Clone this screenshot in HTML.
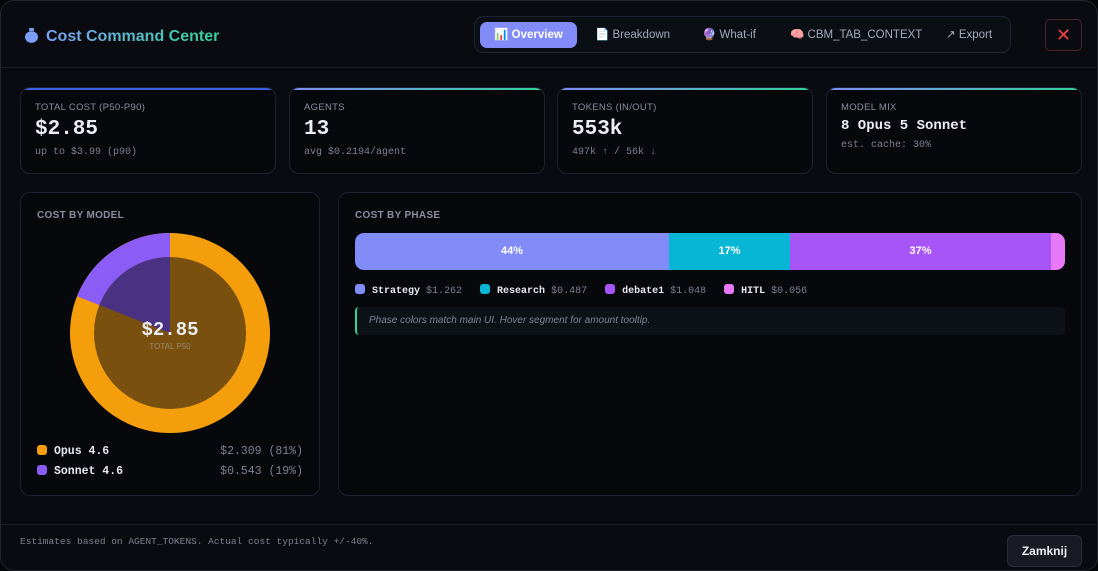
<!DOCTYPE html><html><head><style>
*{box-sizing:border-box;margin:0;padding:0}
body{width:1098px;height:571px;background:#050608;font-family:"Liberation Sans",sans-serif;overflow:hidden;position:relative}
.modal{position:absolute;left:0;top:0;width:1098px;height:571px;background:#0a0b10;box-shadow:inset 0 0 0 1px #23252f;border-radius:14px}
.mono{font-family:"Liberation Mono",monospace}
.hdr{position:absolute;left:0;top:0;width:1098px;height:68px;border-bottom:1px solid #1c1e28}
.title{position:absolute;left:46px;top:28px;font-size:16px;font-weight:bold;background:linear-gradient(90deg,#7aa0f5,#34d399);-webkit-background-clip:text;color:transparent}
.tabs{position:absolute;left:474px;top:16px;width:537px;height:37px;border:1px solid #1f2336;border-radius:9px;background:#0c0e16}
.tab{position:absolute;top:5px;height:26px;line-height:26px;font-size:11.5px;color:#a4a8b8}
.tab.on{left:5px;width:97px;background:#818cf8;border-radius:7px;color:#fff;font-weight:bold;text-align:center}
.close{position:absolute;left:1045px;top:19px;width:37px;height:32px;border:1px solid #4a2428;border-radius:5px;color:#ef4444;text-align:center;line-height:30px;font-size:18px}
.card{position:absolute;top:87px;height:87px;border:1px solid #1e2130;border-radius:10px;background:#07080c;overflow:hidden}
.card:before{content:"";position:absolute;left:0;right:0;top:0;height:2px;background:linear-gradient(90deg,#818cf8,#34d399)}
.card.b:before{background:#3b62e0}
.lbl{position:absolute;left:14px;top:14px;font-size:9.5px;color:#8a8ea0;letter-spacing:.3px}
.val{position:absolute;left:14px;top:30px;font-size:21px;font-weight:bold;color:#eceef4}
.sub{position:absolute;left:14px;top:59px;font-size:10px;color:#7c8090}
.panel{position:absolute;top:192px;height:304px;border:1px solid #1e2130;border-radius:10px;background:#07080c}
.pt{position:absolute;left:16px;top:17px;font-size:10px;font-weight:bold;color:#8a8ea0;letter-spacing:.3px}
.lg{position:absolute;font-size:11.5px;font-weight:bold;color:#e8e8ee}
.dot{display:inline-block;width:10px;height:10px;border-radius:3px;vertical-align:-1px;margin-right:7px}
.amt{color:#7c8090;font-weight:normal}
.seg{position:absolute;top:0;height:37px;line-height:37px;text-align:center;color:#fff;font-size:11px;font-weight:bold}
</style></head><body><div class="modal">
<div class="hdr">
<div style="position:absolute;left:25px;top:28px;width:13px;height:15px;"><svg width="13" height="15"><rect x="4" y="0" width="5" height="3" rx="1" fill="#7aa0f5"/><ellipse cx="6.5" cy="9" rx="6.5" ry="5.8" fill="#7aa0f5"/></svg></div>
<div class="title">Cost Command Center</div>
<div class="tabs">
<div class="tab on">📊 Overview</div>
<div class="tab" style="left:120px">📄 Breakdown</div>
<div class="tab" style="left:227px">🔮 What-if</div>
<div class="tab" style="left:315px">🧠 CBM_TAB_CONTEXT</div>
<div class="tab" style="left:471px">↗ Export</div>
</div>
<div class="close">✕</div>
</div>
<div class="card b" style="left:20px;width:256px"><div class="lbl">TOTAL COST (P50-P90)</div><div class="val mono">$2.85</div><div class="sub mono">up to $3.99 (p90)</div></div>
<div class="card" style="left:289px;width:256px"><div class="lbl">AGENTS</div><div class="val mono">13</div><div class="sub mono">avg $0.2194/agent</div></div>
<div class="card" style="left:557px;width:256px"><div class="lbl">TOKENS (IN/OUT)</div><div class="val mono">553k</div><div class="sub mono">497k ↑ / 56k ↓</div></div>
<div class="card" style="left:826px;width:256px"><div class="lbl">MODEL MIX</div><div class="val mono" style="font-size:14px;top:30px">8 Opus 5 Sonnet</div><div class="sub mono" style="top:52px">est. cache: 30%</div></div>

<div class="panel" style="left:20px;width:300px">
<div class="pt">COST BY MODEL</div>
<svg style="position:absolute;left:-21px;top:-193px" width="340" height="500">
<circle cx="170" cy="333" r="100" fill="#f59e0b"/>
<path d="M170 333 L170 233 A100 100 0 0 0 77 296.2 Z" fill="#8b5cf6"/>
<circle cx="170" cy="333" r="76" fill="#7a500e"/>
<path d="M170 333 L170 257 A76 76 0 0 0 99.3 305 Z" fill="#4a3282"/>
<text x="170" y="335" text-anchor="middle" font-family="Liberation Mono" font-weight="bold" font-size="19" fill="#eceef4">$2.85</text>
<text x="170" y="349" text-anchor="middle" font-family="Liberation Sans" font-size="8" fill="#9a8a70">TOTAL P50</text>
</svg>
<div class="lg mono" style="left:16px;top:252px;width:266px"><span class="dot" style="background:#f59e0b"></span>Opus 4.6<span class="amt" style="float:right">$2.309 (81%)</span></div>
<div class="lg mono" style="left:16px;top:272px;width:266px"><span class="dot" style="background:#8b5cf6"></span>Sonnet 4.6<span class="amt" style="float:right">$0.543 (19%)</span></div>
</div>

<div class="panel" style="left:338px;width:744px">
<div class="pt">COST BY PHASE</div>
<div style="position:absolute;left:16px;top:40px;width:710px;height:37px;border-radius:9px;overflow:hidden">
<div class="seg" style="left:0;width:314px;background:#818cf8">44%</div>
<div class="seg" style="left:314px;width:121px;background:#06b6d4">17%</div>
<div class="seg" style="left:435px;width:261px;background:#a855f7">37%</div>
<div class="seg" style="left:696px;width:14px;background:#e879f9"></div>
</div>
<div class="lg mono" style="left:16px;top:91px;font-size:10px"><span class="dot" style="background:#818cf8"></span>Strategy <span class="amt">$1.262</span>&nbsp;&nbsp; <span class="dot" style="background:#06b6d4"></span>Research <span class="amt">$0.487</span>&nbsp;&nbsp; <span class="dot" style="background:#a855f7"></span>debate1 <span class="amt">$1.048</span>&nbsp;&nbsp; <span class="dot" style="background:#e879f9"></span>HITL <span class="amt">$0.056</span></div>
<div style="position:absolute;left:16px;top:114px;width:710px;height:28px;background:#0d1218;border-left:2px solid #34d399;border-radius:4px;font-size:10px;font-style:italic;color:#7c8494;line-height:28px;padding-left:12px">Phase colors match main UI. Hover segment for amount tooltip.</div>
</div>

<div style="position:absolute;left:0;top:524px;width:1098px;border-top:1px solid #1c1e28"></div>
<div class="mono" style="position:absolute;left:20px;top:536px;font-size:9.5px;color:#7c8090">Estimates based on AGENT_TOKENS. Actual cost typically +/-40%.</div>
<div style="position:absolute;left:1007px;top:535px;width:75px;height:32px;border:1px solid #2a2d3a;background:#181a24;border-radius:6px;color:#eceef4;font-weight:bold;font-size:12px;text-align:center;line-height:30px">Zamknij</div>
</div></body></html>
